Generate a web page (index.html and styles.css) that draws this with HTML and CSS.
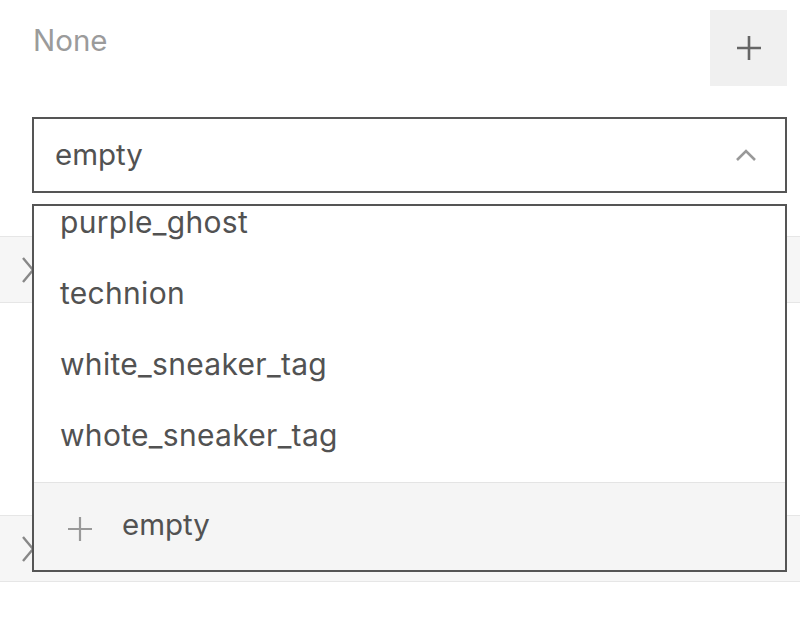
FILE: index.html
```html
<!DOCTYPE html>
<html>
<head>
<meta charset="utf-8">
<link rel="stylesheet" href="styles.css">
</head>
<body>
<div class="page">
  <div class="header">
    <span class="label">None</span>
    <button class="add-btn" aria-label="Add">
      <svg width="26" height="26" viewBox="0 0 26 26"><path d="M13 1v24M1 13h24" stroke="#666" stroke-width="2.6" fill="none"/></svg>
    </button>
  </div>
  <div class="select">
    <span class="select-value">empty</span>
    <svg class="chev-up" width="22" height="14" viewBox="0 0 22 14"><path d="M2 12L11 3l9 9" stroke="#999" stroke-width="2.6" fill="none"/></svg>
  </div>
  <div class="rows">
    <div class="row">
      <svg class="chev-right" width="14" height="28" viewBox="0 0 14 28"><path d="M2 2l10 12L2 26" stroke="#888" stroke-width="2.4" fill="none"/></svg>
    </div>
    <div class="gap"></div>
    <div class="row">
      <svg class="chev-right" width="14" height="28" viewBox="0 0 14 28"><path d="M2 2l10 12L2 26" stroke="#888" stroke-width="2.4" fill="none"/></svg>
    </div>
  </div>
  <div class="menu">
    <ul class="options">
      <li class="option">purple_ghost</li>
      <li class="option">technion</li>
      <li class="option">white_sneaker_tag</li>
      <li class="option">whote_sneaker_tag</li>
    </ul>
    <div class="create">
      <svg class="create-plus" width="26" height="26" viewBox="0 0 26 26"><path d="M13 1v24M1 13h24" stroke="#999" stroke-width="2.2" fill="none"/></svg>
      <span class="create-text">empty</span>
    </div>
  </div>
</div>
</body>
</html>
```
FILE: styles.css
```css
* { box-sizing: border-box; }
html, body {
  margin: 0;
  padding: 0;
  background: #fff;
  font-family: Inter, "Noto Sans", sans-serif;
  width: 800px;
  height: 618px;
  overflow: hidden;
}
.page {
  position: relative;
  width: 800px;
  height: 618px;
}
.header {
  display: flex;
  justify-content: space-between;
  align-items: flex-start;
  padding: 10px 13px 0 33px;
  height: 86px;
}
.label {
  font-size: 29.5px;
  line-height: 36px;
  color: #9b9b9b;
  margin-top: 12px;
}
.add-btn {
  width: 77px;
  height: 76px;
  border: none;
  padding: 0;
  background: #f0f0f0;
  display: flex;
  align-items: center;
  justify-content: center;
}
.select {
  margin: 31px 13px 0 32px;
  height: 76px;
  border: 2px solid #555;
  display: flex;
  align-items: center;
  justify-content: space-between;
  padding: 0 28px 0 21px;
}
.select-value {
  font-size: 29.5px;
  color: #525252;
  margin-top: -2px;
}
.chev-up { margin-top: -1px; }
.rows {
  margin-top: 43px;
}
.row {
  height: 67px;
  border-top: 1px solid #e6e6e6;
  border-bottom: 1px solid #e6e6e6;
  background: #f6f6f6;
  display: flex;
  align-items: center;
  padding-left: 21px;
}
.gap { height: 212px; }
.menu {
  position: absolute;
  left: 32px;
  top: 204px;
  width: 755px;
  height: 368px;
  border: 2px solid #555;
  background: #fff;
  overflow: hidden;
  display: flex;
  flex-direction: column;
}
.options {
  list-style: none;
  margin: -20px 0 0 0;
  padding: 0;
  flex: 1;
}
.option {
  height: 71px;
  display: flex;
  align-items: center;
  padding-left: 26px;
  font-size: 30px;
  letter-spacing: 0.3px;
  color: #525252;
}
.create {
  height: 88px;
  border-top: 1px solid #e4e4e4;
  background: #f5f5f5;
  display: flex;
  align-items: center;
  padding-left: 33px;
}
.create-plus { margin-top: 4px; }
.create-text {
  font-size: 29.5px;
  color: #525252;
  margin-left: 29px;
  margin-top: -6px;
}
```
